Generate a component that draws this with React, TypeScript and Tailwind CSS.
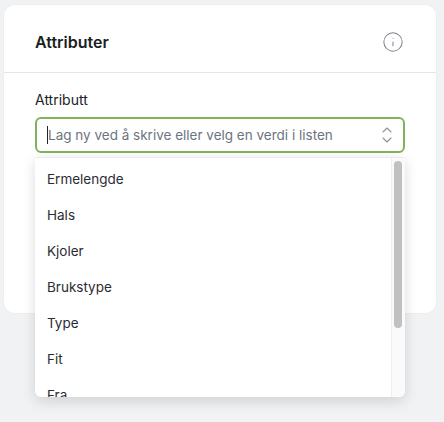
import {Info} from "lucide-react";

const options = ["Ermelengde", "Hals", "Kjoler", "Brukstype", "Type", "Fit", "Fra"];

export default function App() {
    return (
        <div className="h-[422px] w-[444px] overflow-hidden bg-[#f1f2f4] pl-[3px] pt-[4px] font-['Inter',sans-serif] text-[#202328]">
            <div className="h-[310px] w-[434px] rounded-[12px] border border-[#eceef0] bg-white">
                <div className="flex h-[68px] items-center justify-between border-b border-[#e3e5e8] pl-[31px] pr-[32px] pt-[6px]">
                    <h2 className="text-[16px] font-semibold leading-6 text-[#1a1d21]">Attributer</h2>
                    <Info className="h-[22px] w-[22px] text-[#7d838b]" strokeWidth={1.1} />
                </div>
                <div className="relative px-[31px] pt-[17px]">
                    <label className="block text-[14px] leading-5 text-[#202328]">Attributt</label>
                    <div className="mt-[7px] flex h-[36px] w-[370px] items-center justify-between rounded-[6px] border-2 border-[#7fb35a] pl-[10px] pr-[11px]">
                        <span className="border-l border-[#202328] text-[13.5px] leading-[18px] text-[#6d7480]">Lag ny ved å skrive eller velg en verdi i listen</span>
                        <svg className="h-[16px] w-[10px] text-[#8d929a]" viewBox="0 0 10 16" fill="none" stroke="currentColor" strokeWidth="1.1" strokeLinecap="round" strokeLinejoin="round">
                            <path d="M1 5 5 1l4 4" />
                            <path d="M1 11l4 4 4-4" />
                        </svg>
                    </div>
                    <div className="absolute left-[31px] top-[84px] z-10 flex h-[240px] w-[370px] overflow-hidden rounded-b-[6px] rounded-t-[2px] border-t border-[#e9ebed] bg-white shadow-[0_4px_14px_rgba(0,0,0,0.14)]">
                        <ul className="min-w-0 flex-1 pt-[3px]">
                            {options.map((option) => (
                                <li key={option} className="flex h-[36px] items-center pl-[12px] text-[13.5px] text-[#2a2d33]">
                                    {option}
                                </li>
                            ))}
                        </ul>
                        <div className="h-full w-[14px] shrink-0 border-l border-[#eeeeee] bg-[#fafafa] pl-[2px] pt-[3px]">
                            <div className="h-[167px] w-[8px] rounded-[4px] bg-[#c1c1c1]" />
                        </div>
                    </div>
                </div>
            </div>
        </div>
    );
}
